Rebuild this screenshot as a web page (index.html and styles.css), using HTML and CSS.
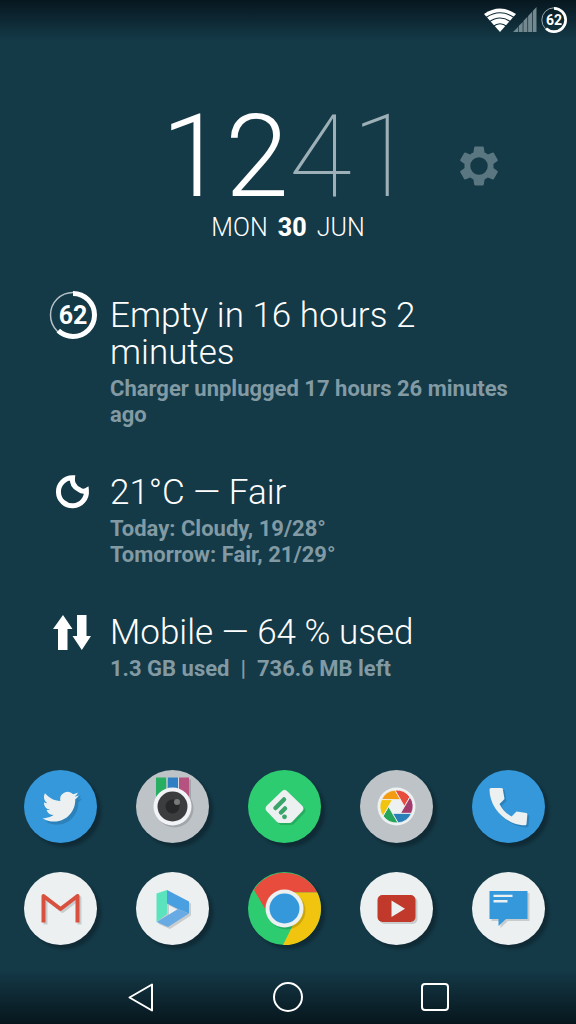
FILE: index.html
```html
<!DOCTYPE html>
<html lang="en">
<head>
  <meta charset="UTF-8" />
  <meta name="viewport" content="width=device-width, initial-scale=1.0"/>
  <title>Home Screen</title>
  <link rel="stylesheet" href="styles.css">
</head>
<body>

  <!-- Status bar -->
  <header class="status-bar">
    <svg class="wifi" viewBox="0 0 32 24" width="32" height="24" aria-hidden="true">
      <path d="M0 6Q16-5 32 6L16 24Z" fill="#fff"/>
      <path d="M2 9.500Q16 0 30 9.500M5 14Q16 6 27 14M9 18.500Q16 13 23 18.500" fill="none" stroke="#0f2c38" stroke-width="1.200"/>
    </svg>
    <svg class="signal" viewBox="0 0 24 26" width="24" height="26" aria-hidden="true">
      <path d="M0 25L5 20V25ZM5.700 19L9.700 15V25H5.700ZM10.400 14L14.400 9.800V25H10.400ZM15.100 9L19.100 4.800V25H15.100ZM19.800 4L23.500 0V25H19.800Z" fill="#73898f"/>
    </svg>
    <div class="battery small">
      <svg viewBox="0 0 48 48" aria-hidden="true">
        <circle cx="24" cy="24" r="22.500" fill="none" stroke="#b4c2c8" stroke-width="1.500"/>
        <circle cx="24" cy="24" r="21.500" fill="none" stroke="#fff" stroke-width="5" pathLength="100" stroke-dasharray="62 38" transform="rotate(-90 24 24)"/>
      </svg>
      <span>62</span>
    </div>
  </header>

  <main>
    <!-- Clock -->
    <section class="clock">
      <div class="clock-row">
        <time class="time" datetime="12:41"><span class="hours">12</span><span class="minutes">41</span></time>
        <button class="settings" aria-label="Settings">
          <svg viewBox="2.200 2 19.600 20" width="38" height="40">
            <path fill="#5a7680" d="M19.430 12.980c.040-.320.070-.640.070-.980s-.030-.660-.070-.980l2.110-1.650c.190-.150.240-.420.120-.640l-2-3.460c-.120-.220-.390-.300-.610-.220l-2.490 1c-.520-.400-1.080-.730-1.690-.980l-.380-2.650C14.460 2.180 14.250 2 14 2h-4c-.250 0-.460.180-.490.420l-.380 2.650c-.610.250-1.170.590-1.690.980l-2.490-1c-.230-.090-.490 0-.610.220l-2 3.460c-.130.220-.070.490.120.640l2.110 1.650c-.040.320-.070.650-.070.980s.030.660.070.980l-2.110 1.650c-.190.150-.240.420-.120.640l2 3.460c.120.220.390.300.610.220l2.490-1c.520.400 1.080.730 1.690.980l.380 2.650c.030.240.240.420.490.420h4c.250 0 .460-.180.490-.420l.380-2.650c.610-.250 1.170-.590 1.690-.980l2.490 1c.230.090.490 0 .610-.220l2-3.460c.120-.220.070-.490-.120-.640l-2.110-1.650zM12 16.500a4.500 4.500 0 1 1 0-9 4.500 4.500 0 0 1 0 9z"/>
          </svg>
        </button>
      </div>
      <p class="date">MON <b>30</b> JUN</p>
    </section>

    <!-- Info widgets -->
    <ul class="info">
      <li>
        <div class="battery">
          <svg viewBox="0 0 48 48" aria-hidden="true">
            <circle cx="24" cy="24" r="22.500" fill="none" stroke="#b4c2c8" stroke-width="1.500"/>
            <circle cx="24" cy="24" r="21.500" fill="none" stroke="#fff" stroke-width="5" pathLength="100" stroke-dasharray="62 38" transform="rotate(-90 24 24)"/>
          </svg>
          <span>62</span>
        </div>
        <div class="info-text">
          <h2>Empty in 16 hours 2 minutes</h2>
          <p>Charger unplugged 17 hours 26 minutes ago</p>
        </div>
      </li>
      <li>
        <svg class="info-icon" viewBox="0 0 48 48" aria-hidden="true">
          <path d="M23.500 9.800A14 14 0 1 0 37.400 22.500Q34 24.500 30 21.500Q22.500 18 23.500 9.800Z" fill="none" stroke="#fff" stroke-width="5"/>
        </svg>
        <div class="info-text">
          <h2>21°C — Fair</h2>
          <p>Today: Cloudy, 19/28°<br>Tomorrow: Fair, 21/29°</p>
        </div>
      </li>
      <li>
        <svg class="info-icon" viewBox="0 0 48 48" aria-hidden="true">
          <path d="M14 7L23.500 21H18.500V42H9V21H4ZM28 7H37.500V28H42L32.800 42L23.500 28H28Z" fill="#fff"/>
        </svg>
        <div class="info-text">
          <h2>Mobile — 64 % used</h2>
          <p>1.3 GB used &nbsp;|&nbsp; 736.6 MB left</p>
        </div>
      </li>
    </ul>
  </main>

  <!-- App dock -->
  <section class="dock">
    <a href="#" class="app blue" aria-label="Twitter">
      <svg viewBox="0 0 73 73">
        <path class="lift" fill="#ecf0f1" transform="translate(18.500 18.500) scale(1.520)" d="M23.950 4.570a10 10 0 0 1-2.820.770 4.960 4.960 0 0 0 2.160-2.720c-.950.550-2 .960-3.130 1.180a4.920 4.920 0 0 0-8.380 4.480C7.690 8.090 4.070 6.130 1.640 3.160a4.820 4.820 0 0 0-.670 2.480c0 1.710.870 3.210 2.190 4.100a4.900 4.900 0 0 1-2.230-.620v.060a4.920 4.920 0 0 0 3.950 4.830 5 5 0 0 1-2.210.080 4.940 4.940 0 0 0 4.600 3.420A9.870 9.870 0 0 1 0 19.540a13.990 13.990 0 0 0 7.550 2.210c9.050 0 14-7.500 14-13.990 0-.210 0-.420-.020-.630a9.940 9.940 0 0 0 2.460-2.550z"/>
      </svg>
    </a>
    <a href="#" class="app grey" aria-label="Camera">
      <svg viewBox="0 0 73 73">
        <g class="lift">
          <path d="M20 7.500H30.500V32H20Z" fill="#27ae60"/>
          <path d="M31.500 7.500H42V32H31.500Z" fill="#2f80c3"/>
          <path d="M43 7.500H53V32H43Z" fill="#b5527f"/>
          <path d="M30.500 7.500h1v20h-1zM42 7.500h1v20h-1z" fill="#d5dade"/>
          <circle cx="36.500" cy="36.500" r="19" fill="#f1f3f6"/>
        </g>
        <circle cx="36.500" cy="36.500" r="15" fill="#3b3d3f"/>
        <circle cx="36.500" cy="36.500" r="7" fill="#27282a"/>
        <circle cx="41" cy="32" r="3" fill="#77797b"/>
      </svg>
    </a>
    <a href="#" class="app green" aria-label="Feedly">
      <svg viewBox="0 0 73 73">
        <path class="lift" d="M33.500 21.500Q36.500 18 39.500 21.500L54 35.500Q57 38.500 54 41.500L44.500 51.500Q43 53 41 53H32Q30 53 28.500 51.500L19 41.500Q16 38.500 19 35.500Z" fill="#ecf0f1"/>
        <path d="M27.500 38L36 29.500M33 42.500L37 38.500" fill="none" stroke="#3aa56a" stroke-width="4.500" stroke-linecap="round"/>
        <circle cx="36.500" cy="46.800" r="2.400" fill="#3aa56a"/>
      </svg>
    </a>
    <a href="#" class="app grey" aria-label="Photos">
      <svg viewBox="-36.500 -36.500 73 73">
        <circle r="19" fill="#eef1f2"/>
        <g stroke="#eef1f2" stroke-width="0.800">
          <path d="M-15-6.900L4-6.900L-1.500-16.400A16.500 16.500 0 0 0-15-6.900Z" fill="#f39c12"/>
          <path d="M-15-6.900L4-6.900L-1.500-16.400A16.500 16.500 0 0 0-15-6.900Z" fill="#e74c3c" transform="rotate(60)"/>
          <path d="M-15-6.900L4-6.900L-1.500-16.400A16.500 16.500 0 0 0-15-6.900Z" fill="#a23b6c" transform="rotate(120)"/>
          <path d="M-15-6.900L4-6.900L-1.500-16.400A16.500 16.500 0 0 0-15-6.900Z" fill="#2980b9" transform="rotate(180)"/>
          <path d="M-15-6.900L4-6.900L-1.500-16.400A16.500 16.500 0 0 0-15-6.900Z" fill="#27a65a" transform="rotate(240)"/>
          <path d="M-15-6.900L4-6.900L-1.500-16.400A16.500 16.500 0 0 0-15-6.900Z" fill="#f1c40f" transform="rotate(300)"/>
        </g>
      </svg>
    </a>
    <a href="#" class="app blue" aria-label="Phone">
      <svg viewBox="0 0 73 73">
        <path class="lift" d="M19 18H29.500Q30.500 18 30.800 19L32.500 29L27.500 34C30 39 34 43.500 39.500 46.500L44.500 41.500L54.500 43Q55.500 43.300 55.300 45L54.500 54Q54.300 55.300 53 55.200C34 55 17.500 38 17.500 19.500Q17.500 18 19 18Z" fill="#ecf0f1"/>
      </svg>
    </a>

    <a href="#" class="app white" aria-label="Gmail">
      <svg viewBox="0 0 73 73">
        <path class="lift" d="M19.500 50.500V24L36.500 37L53.500 24V50.500" fill="none" stroke="#d9503f" stroke-width="4" stroke-linejoin="round"/>
      </svg>
    </a>
    <a href="#" class="app white" aria-label="Bing">
      <svg viewBox="0 0 73 73">
        <g class="lift">
          <path d="M20.500 21.500L31 18V42L20.500 50Z" fill="#5be3bd"/>
          <path d="M31 18L53 29.500V41.500L42 37L31 31.500Z" fill="#4a9fe0"/>
          <path d="M20.500 50L42 37L53 41.500L32 55Z" fill="#68aae4"/>
        </g>
      </svg>
    </a>
    <a href="#" class="app chrome" aria-label="Chrome">
      <svg viewBox="0 0 73 73">
        <path d="M6 18L19 40L36 20.500H69.300A36.500 36.500 0 0 0 6 18Z" fill="#e74c3c"/>
        <path d="M36 20.500H69.300A36.500 36.500 0 0 1 35 73L49 45Z" fill="#f1c40f"/>
        <circle class="lift" cx="36.500" cy="36.500" r="19" fill="#ecf0f1"/>
        <circle cx="36.500" cy="36.500" r="15" fill="#3498db"/>
      </svg>
    </a>
    <a href="#" class="app white" aria-label="YouTube">
      <svg viewBox="0 0 73 73">
        <rect class="lift" x="17.500" y="23" width="38" height="27" rx="5" fill="#c0392b"/>
        <path d="M31.500 28.500L45 36.700L31.500 45Z" fill="#ecf0f1"/>
      </svg>
    </a>
    <a href="#" class="app white" aria-label="Messages">
      <svg viewBox="0 0 73 73">
        <path class="lift" d="M17.500 19H55.500V47H34L26.500 54V47H17.500Z" fill="#3498db"/>
        <path d="M21.500 22.800H40.500V25H21.500ZM21.500 28H35.500V30.500H21.500Z" fill="#ecf0f1"/>
      </svg>
    </a>
  </section>

  <!-- Navigation keys -->
  <nav>
    <button aria-label="Back">
      <svg viewBox="0 0 30 30"><path d="M3.500 15.500L26 2.500V28.500Z"/></svg>
    </button>
    <button aria-label="Home">
      <svg viewBox="0 0 30 30"><circle cx="15" cy="15" r="14"/></svg>
    </button>
    <button aria-label="Recent apps">
      <svg viewBox="0 0 30 30"><rect x="2" y="2" width="26" height="26" rx="3"/></svg>
    </button>
  </nav>

</body>
</html>
```
FILE: styles.css
```css
:root {
  --bg: #143947;
  --text: #fff;
  --muted: #829aa3;
}

* {
  box-sizing: border-box;
  margin: 0;
  padding: 0;
}

body {
  font-family: Roboto, 'Liberation Sans', sans-serif;
  background: var(--bg);
  color: var(--text);
  display: flex;
  flex-direction: column;
  min-height: 100vh;
}

svg {
  display: block;
  overflow: visible;
}

button {
  background: transparent;
  border: none;
  cursor: pointer;
}

/* Status bar */
.status-bar {
  display: flex;
  justify-content: flex-end;
  align-items: center;
  height: 40px;
  padding-right: 9px;
  background: linear-gradient(#07171f, var(--bg));
}

.signal {
  margin-left: -3px;
  margin-right: 4px;
}

.battery {
  display: grid;
  place-items: center;
  flex: none;
  width: 48px;
  height: 48px;
  font-size: 25px;
  font-weight: 700;
}

.battery svg,
.battery span {
  grid-area: 1 / 1;
}

.battery svg {
  width: 100%;
}

.battery.small {
  width: 26px;
  height: 26px;
  font-size: 14px;
}

main {
  flex: 1;
}

/* Clock */
.clock {
  padding-top: 62px;
  text-align: center;
}

.clock-row {
  display: grid;
  grid-template-columns: 1fr auto 1fr;
  align-items: end;
}

.time {
  grid-column: 2;
  font-size: 115px;
  line-height: 110px;
}

.hours {
  font-weight: 300;
}

.minutes {
  font-weight: 100;
  color: #9db0b7;
}

.settings {
  justify-self: start;
  margin: 0 0 26px 45px;
}

.date {
  font-size: 25px;
  font-weight: 300;
  line-height: 32px;
}

.date b {
  margin: 0 4px;
  font-weight: 800;
}

/* Info widgets */
.info {
  display: flex;
  flex-direction: column;
  gap: 46px;
  list-style: none;
  padding: 53px 40px 0 49px;
}

.info li {
  display: flex;
  gap: 13px;
}

.info .battery,
.info-icon {
  flex: none;
  width: 48px;
  height: 48px;
  margin: -6px 0;
}

.info h2 {
  font-size: 35px;
  font-weight: 300;
  line-height: 37px;
}

.info p {
  margin-top: 5px;
  font-size: 22px;
  font-weight: 700;
  line-height: 26px;
  color: var(--muted);
}

/* Dock */
.dock {
  display: grid;
  grid-template-columns: repeat(5, 1fr);
  justify-items: center;
  row-gap: 29px;
  padding: 40px 12px 25px 5px;
}

.app {
  width: 73px;
  height: 73px;
  border-radius: 50%;
  box-shadow: 4px 4px 3px rgba(0, 0, 0, 0.25);
}

.blue { background: #3498db; }
.grey { background: #bdc3c7; }
.green, .chrome { background: #2ecc71; }
.white { background: #ecf0f1; }

.lift {
  filter: drop-shadow(2px 2px 0 rgba(0, 0, 0, 0.15));
}

/* Navigation keys */
nav {
  display: flex;
  justify-content: center;
  align-items: center;
  gap: 117px;
  height: 54px;
  background: linear-gradient(var(--bg), #07161d);
}

nav svg {
  width: 30px;
  height: 30px;
  fill: none;
  stroke: #fff;
  stroke-width: 2;
  stroke-linejoin: round;
}
```
